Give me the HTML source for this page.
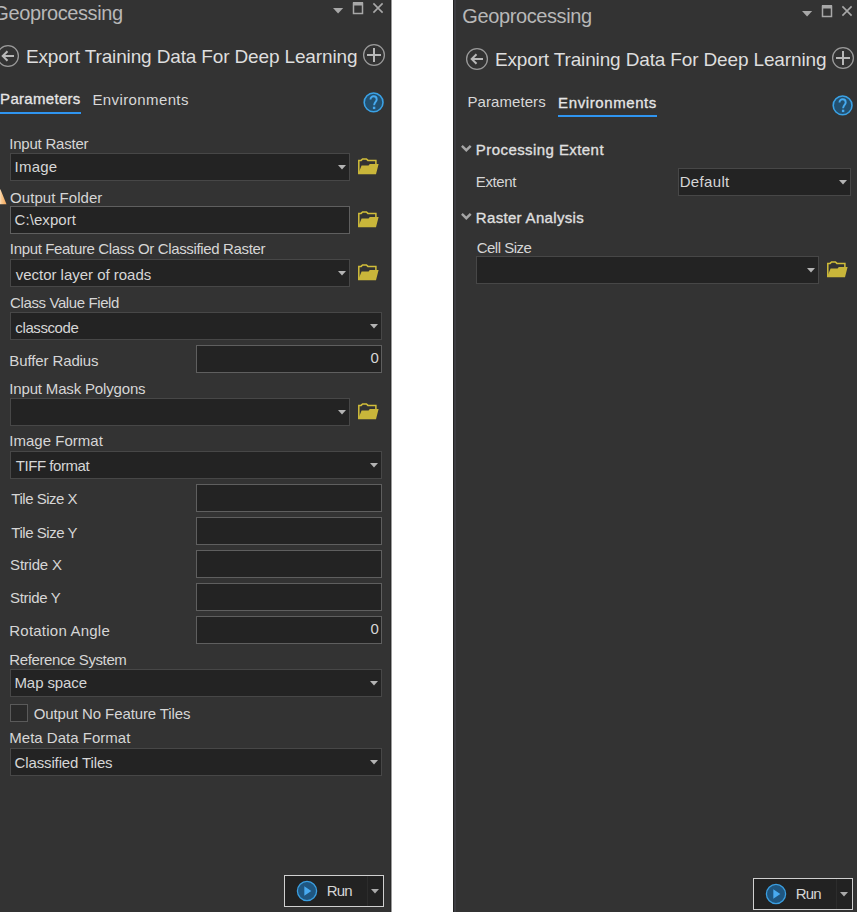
<!DOCTYPE html>
<html><head><meta charset="utf-8"><style>
html,body{margin:0;padding:0;width:857px;height:912px;overflow:hidden;background:#ffffff;position:relative;}
.p{position:absolute;width:0;height:0;}
.t{position:absolute;white-space:nowrap;font-family:"Liberation Sans", sans-serif;}
.r{position:absolute;}
#clipR{position:absolute;left:453px;top:0;width:404px;height:912px;overflow:hidden;}
#clipL{position:absolute;left:0;top:0;width:392px;height:912px;overflow:hidden;}
</style></head><body>
<div id="clipL"><div class="p" style="left:0px;top:0px"><div class="r" style="left:-16px;top:-10px;width:407px;height:1000px;background:#333333"></div><div class="r" style="left:390px;top:-10px;width:1px;height:1000px;background:#2a2a2a;"></div><div class="t" style="left:-6.74px;top:1.02px;font-size:20px;line-height:24px;color:#b8b8b8;font-weight:400;letter-spacing:-0.390px">Geoprocessing</div><svg class="r" style="left:333px;top:7px" width="11" height="8" viewBox="0 0 11 8"><path d="M0 1.1H10.2L5.1 6.5Z" fill="#a8a8a8"/></svg><svg class="r" style="left:352px;top:1px" width="12" height="14" viewBox="0 0 12 14"><rect x="1.5" y="2.3" width="9" height="10.2" fill="none" stroke="#a8a8a8" stroke-width="1.5"/><rect x="1" y="1" width="10" height="3.5" fill="#a8a8a8"/></svg><svg class="r" style="left:372px;top:2px" width="12" height="12" viewBox="0 0 12 12"><path d="M1.4 1.4L10.6 10.6M10.6 1.4L1.4 10.6" stroke="#a8a8a8" stroke-width="1.6"/></svg><svg class="r" style="left:-4px;top:43.7px" width="24" height="24" viewBox="0 0 24 24"><circle cx="12" cy="12" r="10.4" fill="none" stroke="#9a9a9a" stroke-width="1.3"/><path d="M18 12H7M11.5 7.2L6.7 12L11.5 16.8" fill="none" stroke="#b8b8b8" stroke-width="2"/></svg><div class="t" style="left:25.94px;top:44.87px;font-size:19px;line-height:23px;color:#dedede;font-weight:400;letter-spacing:-0.146px">Export Training Data For Deep Learning</div><svg class="r" style="left:361.6px;top:42.5px" width="24" height="24" viewBox="0 0 24 24"><circle cx="12" cy="12" r="10.4" fill="none" stroke="#9a9a9a" stroke-width="1.3"/><path d="M5 12H19M12 5V19" fill="none" stroke="#b8b8b8" stroke-width="2"/></svg><svg class="r" style="left:363px;top:91px" width="22" height="22" viewBox="0 0 22 22"><g transform="translate(-0.4 0.4)"><circle cx="11" cy="11" r="9.4" fill="#23506f" stroke="#3aa2e6" stroke-width="1.6"/><path d="M7.9 8.2C7.9 6.1 9.3 4.9 11 4.9S14.1 6.1 14.1 8C14.1 10.3 11.5 10.6 11.5 13.9" fill="none" stroke="#46aaf0" stroke-width="1.9"/><rect x="10.3" y="15.3" width="2.4" height="2.4" fill="#46aaf0"/></g></svg><div class="r" style="left:284px;top:875px;width:100px;height:32px;background:#222222;box-shadow:inset 0 0 0 1px #d0d0d0;"></div><div class="r" style="left:367px;top:876px;width:1px;height:30px;background:#2c2c2c;"></div><svg class="r" style="left:295px;top:879px" width="24" height="24" viewBox="0 0 24 24"><circle cx="12" cy="12" r="9.6" fill="#1f5680" stroke="#3a9ee0" stroke-width="1.3"/><path d="M9.3 7.2L16.3 12L9.3 16.8Z" fill="#48aaf0"/></svg><div class="t" style="left:326.66px;top:881.59px;font-size:15px;line-height:18px;color:#d6d6d6;font-weight:400;letter-spacing:-0.765px">Run</div><svg class="r" style="left:371px;top:889px" width="8" height="5" viewBox="0 0 8 5"><path d="M0 0H8L4 4.5Z" fill="#aaaaaa"/></svg><div class="t" style="left:0.10px;top:89.95px;font-size:15px;line-height:18px;color:#e6e6e6;font-weight:400;letter-spacing:0.300px;-webkit-text-stroke:0.3px #e6e6e6">Parameters</div><div class="t" style="left:92.48px;top:90.93px;font-size:15px;line-height:18px;color:#d8d8d8;font-weight:400;letter-spacing:0.385px">Environments</div><div class="r" style="left:0px;top:112px;width:81px;height:2px;background:#2f95f0;"></div><div class="r" style="left:10px;top:153px;width:340px;height:28px;background:#232323;box-shadow:inset 0 0 0 1px #474747;"></div><svg class="r" style="left:338px;top:165px" width="8" height="5" viewBox="0 0 8 5"><path d="M0 0H8L4 4.5Z" fill="#b4b4b4"/></svg><svg class="r" style="left:357px;top:158px" width="22" height="18" viewBox="0 0 22 18"><path d="M1.8 16V2.4H4.1L5.6 0.9H9.4L10.9 2.4H18.9V6" fill="none" stroke="#d2be3a" stroke-width="1.5"/><path d="M4.6 7.4H11.6L12.8 6H21.6L19 16.3H1Z" fill="#c9b63a"/></svg><svg class="r" style="left:-7px;top:188px" width="15" height="17" viewBox="0 0 15 17"><defs><linearGradient id="wg" x1="0" x2="1" y1="0" y2="0"><stop offset="0" stop-color="#f6c68c"/><stop offset="0.45" stop-color="#fbe0c0"/><stop offset="0.6" stop-color="#f8c890"/><stop offset="1" stop-color="#f2a456"/></linearGradient></defs><path d="M7.3 1L13.5 16.2H1.1Z" fill="url(#wg)"/></svg><div class="r" style="left:10px;top:206px;width:340px;height:28px;background:#232323;box-shadow:inset 0 0 0 1px #5f5f5f;"></div><svg class="r" style="left:357px;top:211px" width="22" height="18" viewBox="0 0 22 18"><path d="M1.8 16V2.4H4.1L5.6 0.9H9.4L10.9 2.4H18.9V6" fill="none" stroke="#d2be3a" stroke-width="1.5"/><path d="M4.6 7.4H11.6L12.8 6H21.6L19 16.3H1Z" fill="#c9b63a"/></svg><div class="r" style="left:10px;top:259px;width:340px;height:28px;background:#232323;box-shadow:inset 0 0 0 1px #474747;"></div><svg class="r" style="left:338px;top:271px" width="8" height="5" viewBox="0 0 8 5"><path d="M0 0H8L4 4.5Z" fill="#b4b4b4"/></svg><svg class="r" style="left:357px;top:264px" width="22" height="18" viewBox="0 0 22 18"><path d="M1.8 16V2.4H4.1L5.6 0.9H9.4L10.9 2.4H18.9V6" fill="none" stroke="#d2be3a" stroke-width="1.5"/><path d="M4.6 7.4H11.6L12.8 6H21.6L19 16.3H1Z" fill="#c9b63a"/></svg><div class="r" style="left:10px;top:312px;width:372px;height:28px;background:#232323;box-shadow:inset 0 0 0 1px #474747;"></div><svg class="r" style="left:370px;top:324px" width="8" height="5" viewBox="0 0 8 5"><path d="M0 0H8L4 4.5Z" fill="#b4b4b4"/></svg><div class="r" style="left:196px;top:345px;width:186px;height:28px;background:#232323;box-shadow:inset 0 0 0 1px #5f5f5f;"></div><div class="r" style="left:10px;top:398px;width:340px;height:28px;background:#232323;box-shadow:inset 0 0 0 1px #474747;"></div><svg class="r" style="left:338px;top:410px" width="8" height="5" viewBox="0 0 8 5"><path d="M0 0H8L4 4.5Z" fill="#b4b4b4"/></svg><svg class="r" style="left:357px;top:403px" width="22" height="18" viewBox="0 0 22 18"><path d="M1.8 16V2.4H4.1L5.6 0.9H9.4L10.9 2.4H18.9V6" fill="none" stroke="#d2be3a" stroke-width="1.5"/><path d="M4.6 7.4H11.6L12.8 6H21.6L19 16.3H1Z" fill="#c9b63a"/></svg><div class="r" style="left:10px;top:451px;width:372px;height:28px;background:#232323;box-shadow:inset 0 0 0 1px #474747;"></div><svg class="r" style="left:370px;top:463px" width="8" height="5" viewBox="0 0 8 5"><path d="M0 0H8L4 4.5Z" fill="#b4b4b4"/></svg><div class="r" style="left:196px;top:484px;width:186px;height:28px;background:#232323;box-shadow:inset 0 0 0 1px #5f5f5f;"></div><div class="r" style="left:196px;top:517px;width:186px;height:28px;background:#232323;box-shadow:inset 0 0 0 1px #5f5f5f;"></div><div class="r" style="left:196px;top:550px;width:186px;height:28px;background:#232323;box-shadow:inset 0 0 0 1px #5f5f5f;"></div><div class="r" style="left:196px;top:583px;width:186px;height:28px;background:#232323;box-shadow:inset 0 0 0 1px #5f5f5f;"></div><div class="r" style="left:196px;top:616px;width:186px;height:28px;background:#232323;box-shadow:inset 0 0 0 1px #5f5f5f;"></div><div class="r" style="left:10px;top:669px;width:372px;height:28px;background:#232323;box-shadow:inset 0 0 0 1px #474747;"></div><svg class="r" style="left:370px;top:681px" width="8" height="5" viewBox="0 0 8 5"><path d="M0 0H8L4 4.5Z" fill="#b4b4b4"/></svg><div class="r" style="left:10px;top:704px;width:18px;height:18px;background:#2a2a2a;box-shadow:inset 0 0 0 1px #5a5a5a;"></div><div class="r" style="left:10px;top:748px;width:372px;height:28px;background:#232323;box-shadow:inset 0 0 0 1px #474747;"></div><svg class="r" style="left:370px;top:760px" width="8" height="5" viewBox="0 0 8 5"><path d="M0 0H8L4 4.5Z" fill="#b4b4b4"/></svg><div class="t" style="left:9.30px;top:134.67px;font-size:15px;line-height:18px;color:#d6d6d6;font-weight:400;letter-spacing:-0.229px">Input Raster</div><div class="t" style="left:14.48px;top:157.95px;font-size:15px;line-height:18px;color:#d6d6d6;font-weight:400;letter-spacing:0.248px">Image</div><div class="t" style="left:10.10px;top:188.65px;font-size:15px;line-height:18px;color:#d6d6d6;font-weight:400;letter-spacing:0.037px">Output Folder</div><div class="t" style="left:14.56px;top:211.47px;font-size:15px;line-height:18px;color:#d6d6d6;font-weight:400;letter-spacing:0.067px">C:\export</div><div class="t" style="left:9.84px;top:240.39px;font-size:15px;line-height:18px;color:#d6d6d6;font-weight:400;letter-spacing:-0.348px">Input Feature Class Or Classified Raster</div><div class="t" style="left:15.72px;top:266.29px;font-size:15px;line-height:18px;color:#d6d6d6;font-weight:400;letter-spacing:-0.018px">vector layer of roads</div><div class="t" style="left:10.10px;top:294.39px;font-size:15px;line-height:18px;color:#d6d6d6;font-weight:400;letter-spacing:-0.394px">Class Value Field</div><div class="t" style="left:15.36px;top:318.75px;font-size:15px;line-height:18px;color:#d6d6d6;font-weight:400;letter-spacing:-0.405px">classcode</div><div class="t" style="left:9.30px;top:351.83px;font-size:15px;line-height:18px;color:#d6d6d6;font-weight:400;letter-spacing:-0.112px">Buffer Radius</div><div class="t" style="left:9.30px;top:379.75px;font-size:15px;line-height:18px;color:#d6d6d6;font-weight:400;letter-spacing:-0.165px">Input Mask Polygons</div><div class="t" style="left:9.30px;top:432.23px;font-size:15px;line-height:18px;color:#d6d6d6;font-weight:400;letter-spacing:0.016px">Image Format</div><div class="t" style="left:15.82px;top:457.11px;font-size:15px;line-height:18px;color:#d6d6d6;font-weight:400;letter-spacing:-0.459px">TIFF format</div><div class="t" style="left:11.36px;top:490.47px;font-size:15px;line-height:18px;color:#d6d6d6;font-weight:400;letter-spacing:-0.495px">Tile Size X</div><div class="t" style="left:11.36px;top:523.83px;font-size:15px;line-height:18px;color:#d6d6d6;font-weight:400;letter-spacing:-0.468px">Tile Size Y</div><div class="t" style="left:10.10px;top:556.01px;font-size:15px;line-height:18px;color:#d6d6d6;font-weight:400;letter-spacing:-0.219px">Stride X</div><div class="t" style="left:10.10px;top:588.57px;font-size:15px;line-height:18px;color:#d6d6d6;font-weight:400;letter-spacing:-0.360px">Stride Y</div><div class="t" style="left:9.30px;top:621.93px;font-size:15px;line-height:18px;color:#d6d6d6;font-weight:400;letter-spacing:0.222px">Rotation Angle</div><div class="t" style="left:9.30px;top:650.75px;font-size:15px;line-height:18px;color:#d6d6d6;font-weight:400;letter-spacing:-0.390px">Reference System</div><div class="t" style="left:14.48px;top:674.31px;font-size:15px;line-height:18px;color:#d6d6d6;font-weight:400;letter-spacing:-0.090px">Map space</div><div class="t" style="left:33.64px;top:705.11px;font-size:15px;line-height:18px;color:#d6d6d6;font-weight:400;letter-spacing:-0.106px">Output No Feature Tiles</div><div class="t" style="left:9.30px;top:729.13px;font-size:15px;line-height:18px;color:#d6d6d6;font-weight:400;letter-spacing:0.012px">Meta Data Format</div><div class="t" style="left:14.56px;top:754.11px;font-size:15px;line-height:18px;color:#d6d6d6;font-weight:400;letter-spacing:-0.132px">Classified Tiles</div><div class="t" style="left:370.54px;top:348.95px;font-size:15px;line-height:18px;color:#d6d6d6;font-weight:400;letter-spacing:-0.990px">0</div><div class="t" style="left:370.54px;top:619.95px;font-size:15px;line-height:18px;color:#d6d6d6;font-weight:400;letter-spacing:-0.990px">0</div></div><div class="r" style="left:391px;top:0px;width:1px;height:912px;background:#9c9c9c;"></div></div>
<div id="clipR"><div class="r" style="left:-453px;top:0;width:857px;height:912px"><div class="p" style="left:469px;top:3px"><div class="r" style="left:-16px;top:-10px;width:407px;height:1000px;background:#333333"></div><div class="r" style="left:390px;top:-10px;width:1px;height:1000px;background:#2a2a2a;"></div><div class="t" style="left:-6.74px;top:1.02px;font-size:20px;line-height:24px;color:#b8b8b8;font-weight:400;letter-spacing:-0.390px">Geoprocessing</div><svg class="r" style="left:333px;top:7px" width="11" height="8" viewBox="0 0 11 8"><path d="M0 1.1H10.2L5.1 6.5Z" fill="#a8a8a8"/></svg><svg class="r" style="left:352px;top:1px" width="12" height="14" viewBox="0 0 12 14"><rect x="1.5" y="2.3" width="9" height="10.2" fill="none" stroke="#a8a8a8" stroke-width="1.5"/><rect x="1" y="1" width="10" height="3.5" fill="#a8a8a8"/></svg><svg class="r" style="left:372px;top:2px" width="12" height="12" viewBox="0 0 12 12"><path d="M1.4 1.4L10.6 10.6M10.6 1.4L1.4 10.6" stroke="#a8a8a8" stroke-width="1.6"/></svg><svg class="r" style="left:-4px;top:43.7px" width="24" height="24" viewBox="0 0 24 24"><circle cx="12" cy="12" r="10.4" fill="none" stroke="#9a9a9a" stroke-width="1.3"/><path d="M18 12H7M11.5 7.2L6.7 12L11.5 16.8" fill="none" stroke="#b8b8b8" stroke-width="2"/></svg><div class="t" style="left:25.94px;top:44.87px;font-size:19px;line-height:23px;color:#dedede;font-weight:400;letter-spacing:-0.146px">Export Training Data For Deep Learning</div><svg class="r" style="left:361.6px;top:42.5px" width="24" height="24" viewBox="0 0 24 24"><circle cx="12" cy="12" r="10.4" fill="none" stroke="#9a9a9a" stroke-width="1.3"/><path d="M5 12H19M12 5V19" fill="none" stroke="#b8b8b8" stroke-width="2"/></svg><svg class="r" style="left:363px;top:91px" width="22" height="22" viewBox="0 0 22 22"><g transform="translate(-0.4 0.4)"><circle cx="11" cy="11" r="9.4" fill="#23506f" stroke="#3aa2e6" stroke-width="1.6"/><path d="M7.9 8.2C7.9 6.1 9.3 4.9 11 4.9S14.1 6.1 14.1 8C14.1 10.3 11.5 10.6 11.5 13.9" fill="none" stroke="#46aaf0" stroke-width="1.9"/><rect x="10.3" y="15.3" width="2.4" height="2.4" fill="#46aaf0"/></g></svg><div class="r" style="left:284px;top:875px;width:100px;height:32px;background:#222222;box-shadow:inset 0 0 0 1px #d0d0d0;"></div><div class="r" style="left:367px;top:876px;width:1px;height:30px;background:#2c2c2c;"></div><svg class="r" style="left:295px;top:879px" width="24" height="24" viewBox="0 0 24 24"><circle cx="12" cy="12" r="9.6" fill="#1f5680" stroke="#3a9ee0" stroke-width="1.3"/><path d="M9.3 7.2L16.3 12L9.3 16.8Z" fill="#48aaf0"/></svg><div class="t" style="left:326.66px;top:881.59px;font-size:15px;line-height:18px;color:#d6d6d6;font-weight:400;letter-spacing:-0.765px">Run</div><svg class="r" style="left:371px;top:889px" width="8" height="5" viewBox="0 0 8 5"><path d="M0 0H8L4 4.5Z" fill="#aaaaaa"/></svg><div class="r" style="left:89px;top:112px;width:99px;height:2px;background:#2f95f0;"></div><svg class="r" style="left:-9px;top:140px" width="13" height="11" viewBox="0 0 13 11"><path d="M1.9 2.8L6.3 7.2L10.7 2.8" fill="none" stroke="#a6a6a6" stroke-width="2.4"/></svg><div class="r" style="left:209px;top:165px;width:173px;height:28px;background:#232323;box-shadow:inset 0 0 0 1px #474747;"></div><svg class="r" style="left:370px;top:177px" width="8" height="5" viewBox="0 0 8 5"><path d="M0 0H8L4 4.5Z" fill="#b4b4b4"/></svg><svg class="r" style="left:-9px;top:208px" width="13" height="11" viewBox="0 0 13 11"><path d="M1.9 2.8L6.3 7.2L10.7 2.8" fill="none" stroke="#a6a6a6" stroke-width="2.4"/></svg><div class="r" style="left:7px;top:253px;width:343px;height:28px;background:#232323;box-shadow:inset 0 0 0 1px #474747;"></div><svg class="r" style="left:338px;top:265px" width="8" height="5" viewBox="0 0 8 5"><path d="M0 0H8L4 4.5Z" fill="#b4b4b4"/></svg><svg class="r" style="left:357px;top:258px" width="22" height="18" viewBox="0 0 22 18"><path d="M1.8 16V2.4H4.1L5.6 0.9H9.4L10.9 2.4H18.9V6" fill="none" stroke="#d2be3a" stroke-width="1.5"/><path d="M4.6 7.4H11.6L12.8 6H21.6L19 16.3H1Z" fill="#c9b63a"/></svg><div class="t" style="left:-1.52px;top:89.95px;font-size:15px;line-height:18px;color:#d8d8d8;font-weight:400;letter-spacing:0.070px">Parameters</div><div class="t" style="left:89.10px;top:90.75px;font-size:15px;line-height:18px;color:#e6e6e6;font-weight:400;letter-spacing:0.597px;-webkit-text-stroke:0.3px #e6e6e6">Environments</div><div class="t" style="left:6.84px;top:137.75px;font-size:15px;line-height:18px;color:#e0e0e0;font-weight:400;letter-spacing:0.427px;-webkit-text-stroke:0.3px #e0e0e0">Processing Extent</div><div class="t" style="left:6.84px;top:170.23px;font-size:15px;line-height:18px;color:#d6d6d6;font-weight:400;letter-spacing:-0.396px">Extent</div><div class="t" style="left:6.84px;top:206.11px;font-size:15px;line-height:18px;color:#e0e0e0;font-weight:400;letter-spacing:0.321px;-webkit-text-stroke:0.3px #e0e0e0">Raster Analysis</div><div class="t" style="left:7.64px;top:235.65px;font-size:15px;line-height:18px;color:#d6d6d6;font-weight:400;letter-spacing:-0.484px">Cell Size</div><div class="t" style="left:210.66px;top:169.75px;font-size:15px;line-height:18px;color:#d6d6d6;font-weight:400;letter-spacing:0.345px">Default</div></div></div>
<div class="r" style="left:0px;top:0px;width:1px;height:912px;background:#222;"></div><div class="r" style="left:1px;top:0px;width:2px;height:912px;background:#3c3c41;"></div>
</div>
</body></html>
